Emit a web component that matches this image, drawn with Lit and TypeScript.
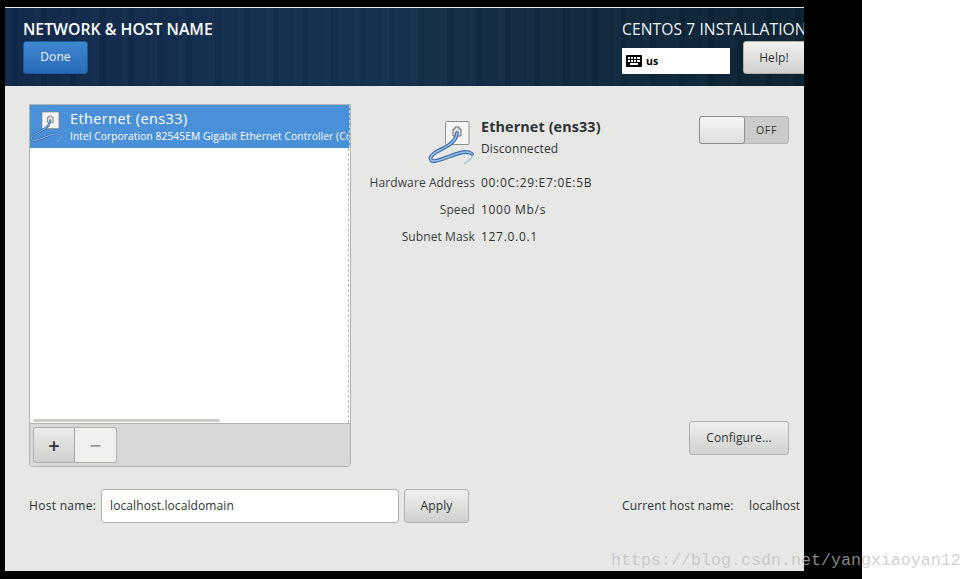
import { LitElement, html, css, svg } from "lit";
import { customElement } from "lit/decorators.js";

@customElement("app-root")
export class AppRoot extends LitElement {
  static styles = css`
    :host { display: block; width: 972px; height: 579px; background: #fff; position: relative; overflow: hidden; font-family: "Open Sans", "Noto Sans", "Liberation Sans", sans-serif; }
    .screen { width: 862px; height: 579px; background: #000; box-sizing: border-box; padding: 7px 0 8px 5px; }
    .win { width: 799px; height: 564px; box-sizing: border-box; border-top: 1px solid #e8e8e8; background: #e7e7e5; overflow: hidden; display: flex; flex-direction: column; color: #2e3436; font-size: 12px; letter-spacing: 0.1px; }
    .head { height: 78px; flex: none; box-sizing: border-box; padding: 10px 0 0 18px; display: grid; grid-template-columns: 599px 260px; color: #fff;
      background:
        repeating-linear-gradient(90deg, rgba(255,255,255,0.018) 0 7px, rgba(0,0,0,0.03) 7px 13px, rgba(255,255,255,0.01) 13px 29px),
        linear-gradient(90deg, #10284a 0%, #14304f 45%, #11293f 70%, #0b2232 100%);
    }
    .title { font-size: 15.8px; font-weight: 600; line-height: 22px; letter-spacing: 0; white-space: nowrap; }
    .done { margin-top: 1px; width: 65px; height: 33px; box-sizing: border-box; padding-bottom: 2px; border: 1px solid #1c5a9c; border-radius: 3px; display: flex; align-items: center; justify-content: center; color: #f0f4f8; font-size: 12px; background: linear-gradient(#3f86d0, #2a6cb8); }
    .inst { font-size: 15.6px; line-height: 22px; letter-spacing: 0.1px; white-space: nowrap; color: #eef1f3; }
    .hr { display: flex; align-items: flex-end; margin-top: 1px; }
    .kbd { width: 108px; height: 26px; background: #fff; color: #000; display: flex; align-items: center; gap: 4px; padding-left: 4px; box-sizing: border-box; font-size: 10.5px; font-weight: 700; }
    .help { margin-left: 13px; width: 80px; height: 33px; box-sizing: border-box; padding-right: 18px; }
    .btn { border: 1px solid #b0b0ac; border-radius: 3px; display: flex; align-items: center; justify-content: center; background: linear-gradient(#f0f0ee, #d0d0ce); color: #2e3436; font-size: 12px; }
    .main { flex: 1; min-height: 0; box-sizing: border-box; padding: 18px 15px 0 24px; display: grid; grid-template-columns: 322px 1fr; }
    .list { height: 363px; box-sizing: border-box; border: 1px solid #b3b3b0; border-radius: 0 0 4px 4px; display: flex; flex-direction: column; overflow: hidden; background: #fff; }
    .row { height: 43px; flex: none; background: #4a90d9; color: #fff; display: flex; gap: 2px; padding-left: 0; overflow: hidden; white-space: nowrap; border-right: 1px dashed #c8d8ea; box-sizing: border-box; }
    .row svg { flex: none; }
    .rowtext { display: flex; flex-direction: column; padding-top: 4px; flex: none; margin-left: 0; }
    .rn { font-size: 14.5px; line-height: 19px; letter-spacing: 0.4px; }
    .rs { font-size: 10.2px; line-height: 15px; margin-top: 1px; }
    .fill { flex: 1; position: relative; border-right: 1px dashed #bbb; margin-right: 1px; }
    .sb { position: absolute; left: 3px; bottom: 1px; width: 187px; height: 3px; border-radius: 2px; background: #cdcdcb; }
    .bar { height: 43px; flex: none; box-sizing: border-box; border-top: 1px solid #b3b3b0; background: #d7d7d5; padding: 3px 0 0 3px; display: flex; }
    .tb { width: 42px; height: 36px; box-sizing: border-box; font-size: 20px; font-weight: 600; }
    .tb.a { border-radius: 3px 0 0 3px; border-right: 1px solid #a8a8a4; background: linear-gradient(#ebebe9, #cfcfcd); }
    .tb.b { border-radius: 0 3px 3px 0; border-left: 0; background: #efefef; color: #9a9a9a; }
    .pane { display: flex; flex-direction: column; align-items: stretch; height: 363px; }
    .top { display: flex; justify-content: space-between; align-items: flex-start; padding-top: 12px; }
    .grid { display: grid; grid-template-columns: 124px auto; column-gap: 6px; align-items: center; }
    .ic { display: flex; justify-content: flex-end; height: 50px; }
    .nm { font-size: 14.4px; font-weight: 700; line-height: 22px; }
    .st { font-size: 12px; line-height: 22px; }
    .id { display: flex; flex-direction: column; height: 50px; }
    .l { text-align: right; line-height: 27px; color: #3a3f41; white-space: nowrap; }
    .v { line-height: 27px; white-space: nowrap; letter-spacing: 0.7px; }
    .gap { height: 3px; grid-column: span 2; }
    .tog { width: 90px; height: 28px; box-sizing: border-box; border: 1px solid #b3b3b0; border-radius: 3px; background: #cbcbc9; display: flex; margin-top: 0; }
    .knob { width: 46px; margin: -1px 0 -1px -1px; box-sizing: border-box; border: 1px solid #8f8f8b; border-radius: 3px; background: linear-gradient(#f6f6f5, #dededc); }
    .off { flex: 1; display: flex; align-items: center; justify-content: center; font-size: 10.5px; font-weight: 400; letter-spacing: 0.6px; color: #2e3436; }
    .cfg { margin: auto 0 12px auto; width: 100px; height: 34px; box-sizing: border-box; padding-bottom: 2px; }
    .bot { flex: none; height: 34px; margin: 22px 0 48px 24px; display: flex; align-items: center; white-space: nowrap; }
    .hl { width: 72px; letter-spacing: 0.3px; padding-bottom: 2px; }
    .inp { width: 298px; height: 34px; box-sizing: border-box; border: 1px solid #b3b3b0; border-radius: 3px; background: #fff; display: flex; align-items: center; padding: 0 0 2px 8px; color: #2e3436; }
    .ap { margin-left: 5px; width: 65px; height: 34px; box-sizing: border-box; padding-bottom: 2px; }
    .cur { margin-left: 153px; width: 127px; letter-spacing: 0.15px; padding-bottom: 2px; }
    .lh { padding-bottom: 2px; }
    .wm { position: absolute; left: 611px; top: 549px; font-family: "Liberation Mono", monospace; font-size: 16.67px; line-height: 24px; color: rgba(190,190,190,0.72); white-space: nowrap; }
  `;

  private cable(big: boolean) {
    const d = "M37 21 C36 30 28 34 18 39 C8 44 9 50 15 49 C24 48 36 40 46 40 C49 40 51 41 52 42";
    const tail = "M52 42 C54 45 50 48 45 51";
    return big
      ? svg`<path d=${d} fill="none" stroke="#3a6cab" stroke-width="3.8" stroke-linecap="round"/><path d=${d} fill="none" stroke="#9cc0ea" stroke-width="1.6" stroke-linecap="round"/><path d=${tail} fill="none" stroke="#7fa3cf" stroke-width="2" stroke-linecap="round" opacity="0.45"/>`
      : svg`<path d=${d} fill="none" stroke="#2f68ad" stroke-width="3" stroke-linecap="round"/><path d=${d} fill="none" stroke="#a9c8ee" stroke-width="1.2" stroke-linecap="round"/><path d=${tail} fill="none" stroke="#a9c8ee" stroke-width="1.6" stroke-linecap="round" opacity="0.4"/>`;
  }

  private netIcon(big: boolean) {
    return svg`
      <rect x="25.5" y="9.5" width="23.5" height="23" rx="1" fill="#f4f4f3" stroke="#8e8e8c"/>
      <path d="M33 24 V17 h2 v-2 h4 v2 h2 V24 Z" fill="#e4e4e2" stroke="#6b6b6b" stroke-width="1"/>
      ${this.cable(big)}`;
  }

  render() {
    return html`
      <div class="screen">
        <div class="win">
          <div class="head">
            <div>
              <div class="title">NETWORK &amp; HOST NAME</div>
              <div class="done">Done</div>
            </div>
            <div>
              <div class="inst">CENTOS 7 INSTALLATION</div>
              <div class="hr">
                <div class="kbd">
                  <svg width="16" height="12" viewBox="0 0 16 12">
                    <rect width="16" height="12" rx="1" fill="#000"/>
                    <path d="M2 2h2v2H2zM5 2h2v2H5zM8 2h2v2H8zM11 2h3v2h-3zM2 5h2v2H2zM5 5h2v2H5zM8 5h2v2H8zM11 5h3v2h-3zM4 8h8v2H4z" fill="#fff"/>
                  </svg>
                  <span>us</span>
                </div>
                <div class="btn help">Help!</div>
              </div>
            </div>
          </div>
          <div class="main">
            <div class="list">
              <div class="row">
                <svg width="38" height="43" viewBox="8.8 -0.2 52.8 59.7">${this.netIcon(false)}</svg>
                <div class="rowtext">
                  <div class="rn">Ethernet (ens33)</div>
                  <div class="rs">Intel Corporation 82545EM Gigabit Ethernet Controller (Copper)</div>
                </div>
              </div>
              <div class="fill"><div class="sb"></div></div>
              <div class="bar">
                <div class="btn tb a">+</div>
                <div class="btn tb b">−</div>
              </div>
            </div>
            <div class="pane">
              <div class="top">
                <div class="grid">
                  <div class="ic">
                    <svg width="60" height="60" viewBox="0 0 60 60" style="margin:-4px -5px 0 0">${this.netIcon(true)}</svg>
                  </div>
                  <div class="id">
                    <div class="nm">Ethernet (ens33)</div>
                    <div class="st">Disconnected</div>
                  </div>
                  <div class="gap"></div>
                  <div class="l">Hardware Address</div><div class="v">00:0C:29:E7:0E:5B</div>
                  <div class="l">Speed</div><div class="v">1000 Mb/s</div>
                  <div class="l">Subnet Mask</div><div class="v">127.0.0.1</div>
                </div>
                <div class="tog"><div class="knob"></div><div class="off">OFF</div></div>
              </div>
              <div class="btn cfg">Configure...</div>
            </div>
          </div>
          <div class="bot">
            <div class="hl">Host name:</div>
            <div class="inp">localhost.localdomain</div>
            <div class="btn ap">Apply</div>
            <div class="cur">Current host name:</div>
            <div class="lh">localhost</div>
          </div>
        </div>
      </div>
      <div class="wm">https://blog.csdn.net/yangxiaoyan12</div>
    `;
  }
}
